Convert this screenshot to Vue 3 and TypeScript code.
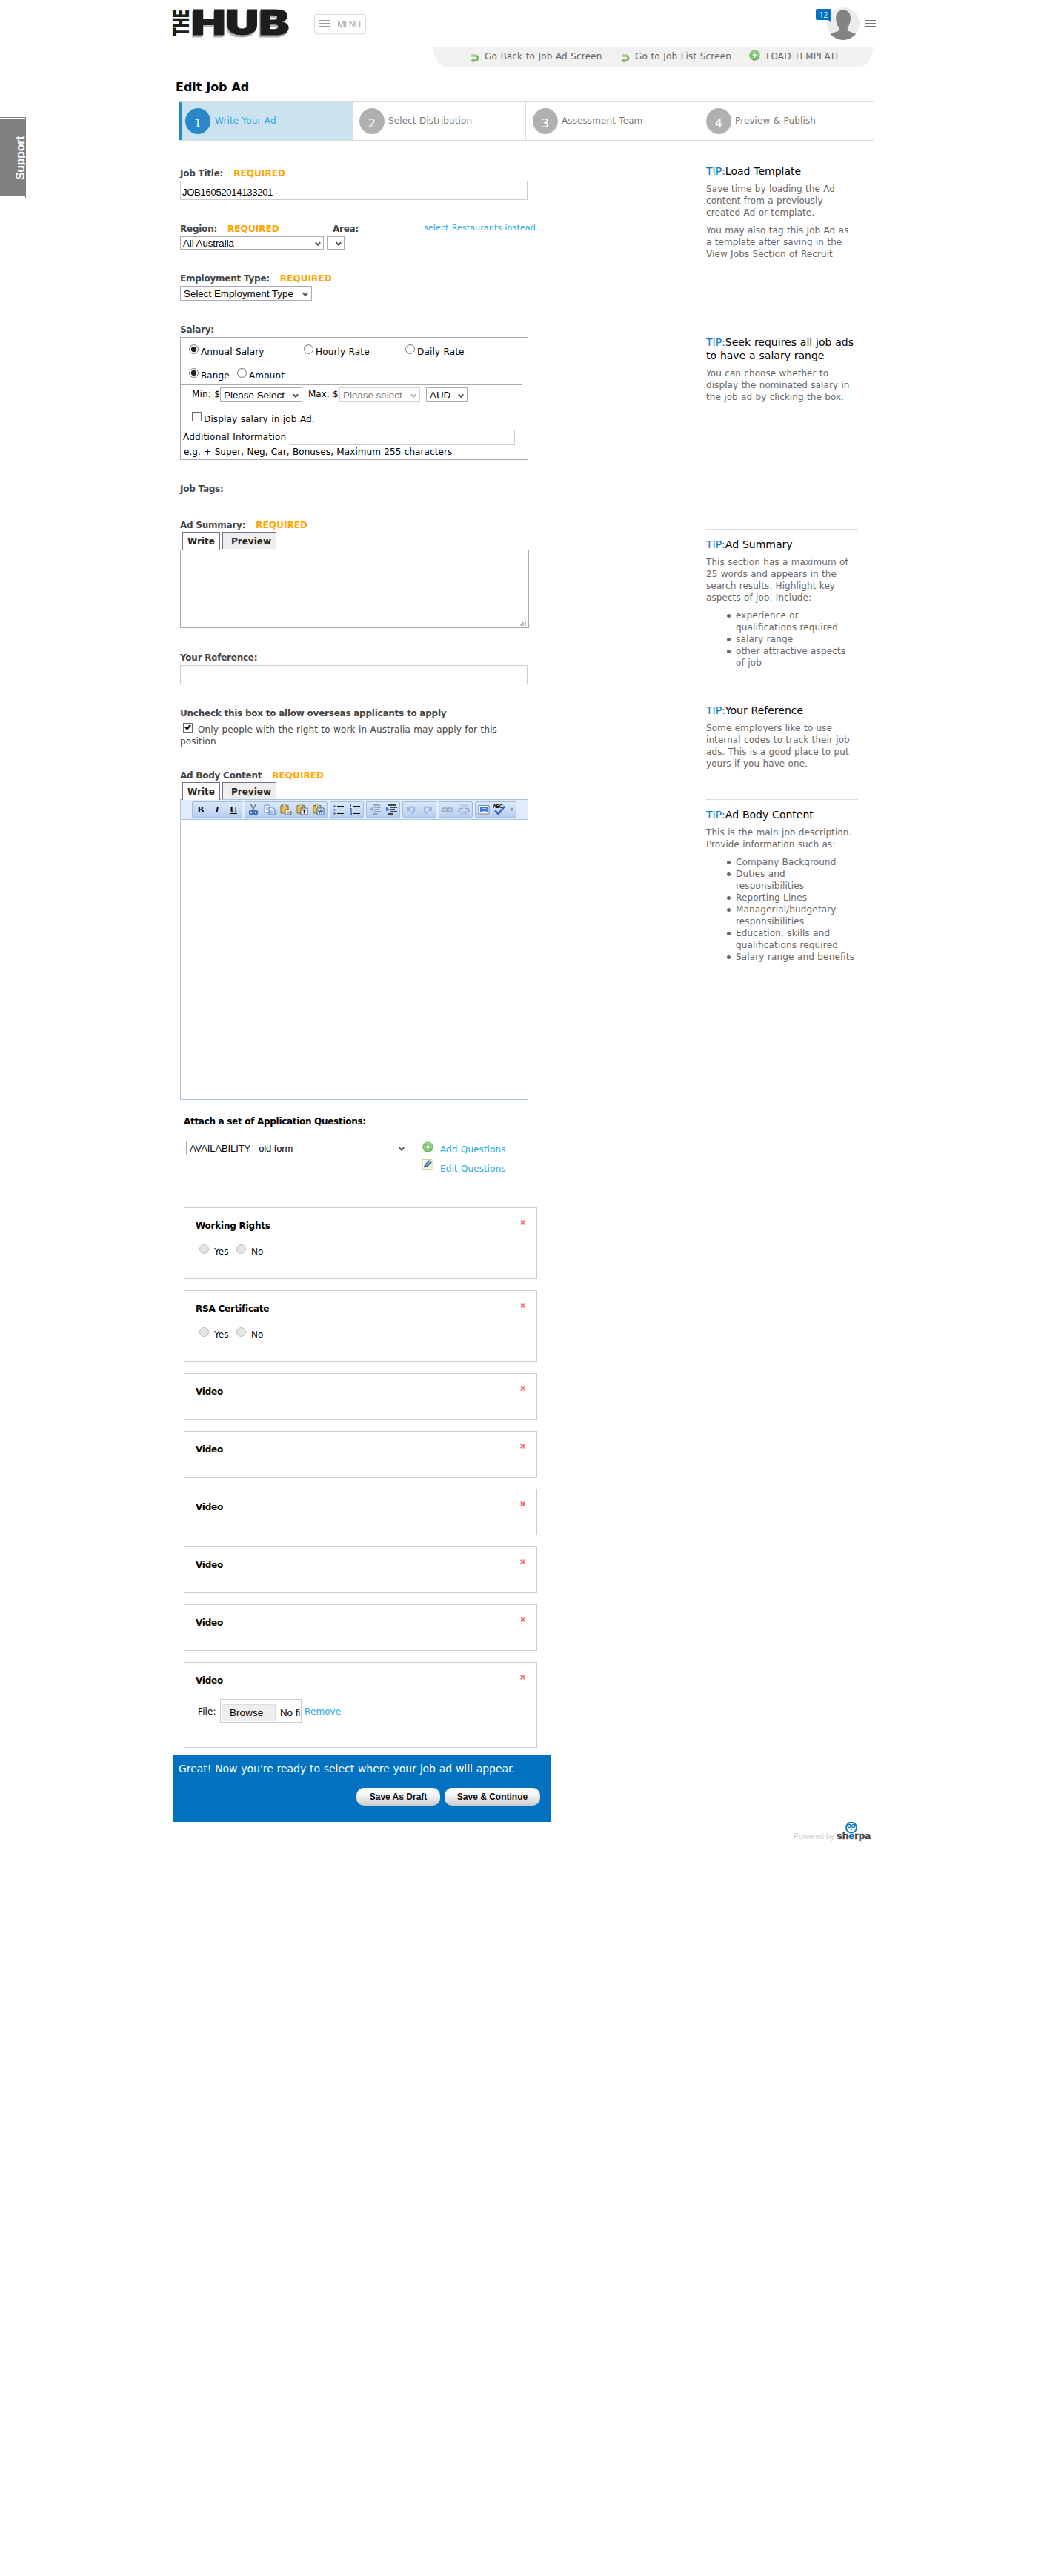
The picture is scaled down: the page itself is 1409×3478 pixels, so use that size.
<script setup lang="ts">
interface Step { n: number; label: string }
interface Tip { title: string; paras: string[]; items?: string[]; height: number }
interface Card { title: string; kind: 'yesno' | 'plain' | 'upload' }

const steps: Step[] = [
  { n: 1, label: 'Write Your Ad' },
  { n: 2, label: 'Select Distribution' },
  { n: 3, label: 'Assessment Team' },
  { n: 4, label: 'Preview & Publish' },
]

const tips: Tip[] = [
  {
    title: 'Load Template',
    paras: [
      'Save time by loading the Ad\ncontent from a previously\ncreated Ad or template.',
      'You may also tag this Job Ad as\na template after saving in the\nView Jobs Section of Recruit',
    ],
    height: 231,
  },
  {
    title: 'Seek requires all job ads\nto have a salary range',
    paras: ['You can choose whether to\ndisplay the nominated salary in\nthe job ad by clicking the box.'],
    height: 273,
  },
  {
    title: 'Ad Summary',
    paras: ['This section has a maximum of\n25 words and appears in the\nsearch results. Highlight key\naspects of job. Include:'],
    items: ['experience or\nqualifications required', 'salary range', 'other attractive aspects\nof job'],
    height: 224,
  },
  {
    title: 'Your Reference',
    paras: ['Some employers like to use\ninternal codes to track their job\nads. This is a good place to put\nyours if you have one.'],
    height: 141,
  },
  {
    title: 'Ad Body Content',
    paras: ['This is the main job description.\nProvide information such as:'],
    items: [
      'Company Background',
      'Duties and\nresponsibilities',
      'Reporting Lines',
      'Managerial/budgetary\nresponsibilities',
      'Education, skills and\nqualifications required',
      'Salary range and benefits',
    ],
    height: 240,
  },
]

const cards: Card[] = [
  { title: 'Working Rights', kind: 'yesno' },
  { title: 'RSA Certificate', kind: 'yesno' },
  { title: 'Video', kind: 'plain' },
  { title: 'Video', kind: 'plain' },
  { title: 'Video', kind: 'plain' },
  { title: 'Video', kind: 'plain' },
  { title: 'Video', kind: 'plain' },
  { title: 'Video', kind: 'upload' },
]
</script>

<template>
  <div class="page">
    <svg width="0" height="0" class="defs">
      <defs>
        <linearGradient id="greenBall" x1="0" y1="0" x2="0" y2="1">
          <stop offset="0" stop-color="#8fce7c" /><stop offset="1" stop-color="#5ba84a" />
        </linearGradient>
        <symbol id="back" viewBox="0 0 12 12">
          <path d="M1 2H6.5A3.2 3.2 0 0 1 6.5 8.8H3.5" fill="none" stroke="#80b868" stroke-width="3" />
          <path d="M4.5 5.5V12L0 8.8Z" fill="#80b868" />
          <path d="M1 1.3H6.5Q9 1.3 10 3.2" fill="none" stroke="#b4d8a4" stroke-width="1" />
        </symbol>
        <symbol id="plus" viewBox="0 0 15 15">
          <circle cx="7.5" cy="7.5" r="7.2" fill="url(#greenBall)" />
          <circle cx="7.5" cy="7.5" r="5" fill="#78bf66" stroke="#a5d999" stroke-width="1" />
          <path d="M7.5 4.6V10.4M4.6 7.5H10.4" stroke="#fff" stroke-width="2" />
        </symbol>
        <symbol id="chev" viewBox="0 0 8 7">
          <path d="M0.8 1.2L4 4.6L7.2 1.2" fill="none" stroke="currentColor" stroke-width="2.1" />
        </symbol>
        <symbol id="cross" viewBox="0 0 7 7">
          <path d="M0.8 0.8L6.2 6.2M6.2 0.8L0.8 6.2" stroke="#f56a6a" stroke-width="2" />
        </symbol>
      </defs>
    </svg>

    <div class="support"><span>Support</span></div>

    <header class="head">
      <svg class="logo" width="162" height="42" viewBox="0 0 162 42">
        <g font-family="Inter, 'Liberation Sans', sans-serif" font-weight="900">
          <g fill="#1d1d1b">
            <text transform="translate(22.5 38) rotate(-90)" font-size="30.5" textLength="36" lengthAdjust="spacingAndGlyphs">THE</text>
          </g>
          <text x="25" y="38.5" font-size="47" fill="#b3b1ae" stroke="#b3b1ae" stroke-width="1" textLength="132" lengthAdjust="spacingAndGlyphs">HUB</text>
          <text x="26.5" y="36" font-size="47" fill="#1d1d1b" stroke="#1d1d1b" stroke-width="1" textLength="132" lengthAdjust="spacingAndGlyphs">HUB</text>
        </g>
      </svg>
      <button class="menu"><i class="bars"></i>MENU</button>
      <div class="user">
        <svg width="44" height="44" viewBox="0 0 44 44">
          <clipPath id="av"><circle cx="22" cy="22" r="22" /></clipPath>
          <circle cx="22" cy="22" r="22" fill="#ececec" />
          <g clip-path="url(#av)" fill="#838383">
            <path d="M22 3.5C28.5 3.5 32 8 32 14C32 20.5 29.8 25 27.8 27.5V31C30 33 36 33.500 40 36.500V44H4V36.500C8 33.500 14 33 16.800 31V27.500C14.200 25 12.200 20.500 12.200 14C12.200 8 15.500 3.500 22 3.500Z" />
          </g>
        </svg>
        <span class="badge">12</span>
      </div>
      <i class="bars dark"></i>
    </header>

    <nav class="top-links">
      <a><svg width="12" height="12"><use href="#back" /></svg>Go Back to Job Ad Screen</a>
      <a><svg width="12" height="12"><use href="#back" /></svg>Go to Job List Screen</a>
      <a class="load"><svg width="15" height="15"><use href="#plus" /></svg>LOAD TEMPLATE</a>
    </nav>

    <h1>Edit Job Ad</h1>

    <div class="steps">
      <div v-for="s in steps" :key="s.n" class="step" :class="{ active: s.n === 1 }">
        <b>{{ s.n }}</b><span>{{ s.label }}</span>
      </div>
    </div>

    <div class="body">
      <main class="form">
        <section class="field first">
          <label>Job Title:<em>REQUIRED</em></label>
          <div class="input"><span>JOB16052014133201</span></div>
        </section>

        <section class="field region">
          <div class="line">
            <label class="reg">Region:<em>REQUIRED</em></label>
            <label class="area">Area:</label>
            <a class="small">select Restaurants instead...</a>
          </div>
          <div class="line selects">
            <div class="select low w194">All Australia<svg width="8" height="7"><use href="#chev" /></svg></div>
            <div class="select low w24"><svg width="8" height="7"><use href="#chev" /></svg></div>
          </div>
        </section>

        <section class="field employment">
          <label>Employment Type:<em>REQUIRED</em></label>
          <div class="select w178">Select Employment Type<svg width="8" height="7"><use href="#chev" /></svg></div>
        </section>

        <section class="field salary">
          <label>Salary:</label>
          <div class="salary-box">
            <div class="srow">
              <span class="opt o1"><i class="radio on"></i>Annual Salary</span>
              <span class="opt o2"><i class="radio"></i>Hourly Rate</span>
              <span class="opt"><i class="radio"></i>Daily Rate</span>
            </div>
            <div class="srow">
              <span class="opt r1"><i class="radio on"></i>Range</span>
              <span class="opt"><i class="radio"></i>Amount</span>
            </div>
            <div class="srow range">
              <div class="line minmax">
                <span class="min">Min: $</span>
                <div class="select w111">Please Select<svg width="8" height="7"><use href="#chev" /></svg></div>
                <span class="max">Max: $</span>
                <div class="select w109 off">Please select<svg width="8" height="7"><use href="#chev" /></svg></div>
                <div class="select w56">AUD<svg width="8" height="7"><use href="#chev" /></svg></div>
              </div>
              <div class="display"><i class="check"></i>Display salary in job Ad.</div>
            </div>
            <div class="add">
              <div class="line"><span class="ai">Additional Information</span><div class="input mini"></div></div>
              <p>e.g. + Super, Neg, Car, Bonuses, Maximum 255 characters</p>
            </div>
          </div>
        </section>

        <section class="field tags"><label>Job Tags:</label></section>

        <section class="field summary">
          <label>Ad Summary:<em>REQUIRED</em></label>
          <div class="tabs"><span class="tab">Write</span><span class="tab alt">Preview</span></div>
          <div class="area-box">
            <svg width="8" height="8" viewBox="0 0 8 8" fill="#bbb">
              <path d="M6 0h2v2h-2zM3 3h2v2h-2zM6 3h2v2h-2zM0 6h2v2h-2zM3 6h2v2h-2zM6 6h2v2h-2z" />
            </svg>
          </div>
        </section>

        <section class="field reference">
          <label>Your Reference:</label>
          <div class="input"></div>
        </section>

        <section class="field overseas">
          <label>Uncheck this box to allow overseas applicants to apply</label>
          <p>
            <i class="check"><svg width="11" height="11" viewBox="0 0 11 11"><path d="M2 4.5L4.600 7.300L9 1.800" fill="none" stroke="#111" stroke-width="2.300" /></svg></i><span>Only people with the right to work in Australia may apply for this<br /></span>position
          </p>
        </section>

        <section class="field content">
          <label>Ad Body Content<em>REQUIRED</em></label>
          <div class="tabs ed"><span class="tab">Write</span><span class="tab alt">Preview</span></div>
          <div class="editor">
            <div class="toolbar">
              <div class="grp g68">
                <span class="t b">B</span><span class="t i">I</span><span class="t u">U</span>
              </div>
              <div class="grp g112">
                <svg viewBox="0 0 16 16"><path d="M4.500 1L9.500 10M11 1L6.500 10" stroke="#6d7f98" stroke-width="1.600" /><circle cx="5" cy="12" r="2.300" fill="none" stroke="#2f62b5" stroke-width="1.800" /><circle cx="11" cy="12" r="2.300" fill="none" stroke="#2f62b5" stroke-width="1.800" /></svg>
                <svg viewBox="0 0 16 16"><path d="M1 2H7L9 4V12H1Z" fill="#fff" stroke="#4d7fcf" /><path d="M7 5H12L15 8V15H7Z" fill="#eaf2ff" stroke="#3a6cc4" /><path d="M3 5H6M3 7H6M9 9H13M9 11H13M9 13H13" stroke="#5f8fd8" /></svg>
                <svg viewBox="0 0 16 16"><path d="M1 2.500H11V13H1Z" fill="#eebf4d" stroke="#8a6a26" /><path d="M3.500 1H8.500V4H3.500Z" fill="#d8d8d8" stroke="#777" stroke-width=".7" /><path d="M7 8H12L15 11V15H7Z" fill="#f2f6ff" stroke="#555" /><path d="M9 11H12M9 13H13" stroke="#667" /></svg>
                <svg viewBox="0 0 16 16"><path d="M1 2.500H11V13H1Z" fill="#eebf4d" stroke="#8a6a26" /><path d="M3.500 1H8.500V4H3.500Z" fill="#d8d8d8" stroke="#777" stroke-width=".7" /><path d="M6 6H15V15H6Z" fill="#f2f6ff" stroke="#555" /><path d="M8 8.500H13M10.500 8.500V13.500" stroke="#111" stroke-width="1.500" /></svg>
                <svg viewBox="0 0 16 16"><path d="M1 2.500H11V13H1Z" fill="#eebf4d" stroke="#8a6a26" /><path d="M3.500 1H8.500V4H3.500Z" fill="#d8d8d8" stroke="#777" stroke-width=".7" /><path d="M6 6H15V15H6Z" fill="#e9f1ff" stroke="#3c66b0" /><path d="M7.500 8.500L9 13L10.500 9L12 13L13.500 8.500" fill="none" stroke="#2b57a8" stroke-width="1.400" /></svg>
              </div>
              <div class="grp g46">
                <svg viewBox="0 0 16 16"><path d="M6 3.500H15M6 8.500H15M6 13.500H15" stroke="#111" /><path d="M1.500 2.500h2v2h-2zM1.500 7.500h2v2h-2zM1.500 12.500h2v2h-2z" fill="#2e4f8f" /></svg>
                <svg viewBox="0 0 16 16"><path d="M6 3.500H15M6 8.500H15M6 13.500H15" stroke="#111" /><path d="M2.500 1v4M1 6.500h2.500L1.500 9.500H4M1 11h2.500v4H1M2 13h1.500" fill="none" stroke="#3a62b0" /></svg>
              </div>
              <div class="grp g46">
                <svg viewBox="0 0 16 16" opacity=".5"><path d="M6 2H15M7 5H16M7 8H13M7 11H16M6 14H11" stroke="#445" stroke-width="1.400" /><path d="M5 4.500V10.500L0.500 7.500Z" fill="#4a80d8" /></svg>
                <svg viewBox="0 0 16 16"><path d="M4 2H15M7 5H16M7 8H13M7 11H16M4 14H11" stroke="#111" stroke-width="1.500" /><path d="M1 4.500V10.500L5.500 7.500Z" fill="#3b70d8" /></svg>
              </div>
              <div class="grp g46">
                <svg viewBox="0 0 16 16"><path d="M3 4V9H8M3.500 8.500C6 3 12 3 12.500 7.500C12.500 10 11 12 8.500 13.500" fill="none" stroke="#8fb2e2" stroke-width="1.800" /></svg>
                <svg viewBox="0 0 16 16"><path d="M13 4V9H8M12.500 8.500C10 3 4 3 3.500 7.500C3.500 10 5 12 7.500 13.500" fill="none" stroke="#8fb2e2" stroke-width="1.800" /></svg>
              </div>
              <div class="grp g46">
                <svg viewBox="0 0 16 16" fill="none" stroke="#94a6c4" stroke-width="1.500"><rect x="1" y="6" width="7" height="4.500" rx="2.200" /><rect x="8" y="6" width="7" height="4.500" rx="2.200" /><path d="M5 8.200H11" /></svg>
                <svg viewBox="0 0 16 16" fill="none" stroke="#94a6c4" stroke-width="1.400"><path d="M7 6.500H3.200A2.200 2.200 0 0 0 3.200 11H6M9 6.500H12.800A2.200 2.200 0 0 1 12.800 11H10" /><path d="M8 0V4M3 1L6 4.500M13 1L10 4.500M8 12V16M3 15.500L6 12.500M13 15.500L10 12.500" stroke-width=".9" /></svg>
              </div>
              <div class="grp g57">
                <svg viewBox="0 0 16 16"><path d="M1 2.500H15V14H1Z" fill="#f5f9ff" stroke="#7d8798" /><path d="M3 4.500H13V12H3Z" fill="#3d79dd" /><path d="M5 6.500H11.500M5 8.500H11.500M5 10.500H11.500" stroke="#c5dbff" stroke-width=".8" /></svg>
                <svg viewBox="0 0 16 16" overflow="visible"><text x="-1" y="5.500" font-family="Liberation Sans, sans-serif" font-weight="700" font-size="7" textLength="14">ABC</text><path d="M2 9.500L6.500 14L15 3.500" fill="none" stroke="#3b67c4" stroke-width="2.600" /></svg>
                <svg class="dd" viewBox="0 0 5 16"><path d="M0 6.500H5L2.500 9.500Z" fill="#5b7fb5" /></svg>
              </div>
            </div>
          </div>
        </section>

        <section class="attach">
          <h2>Attach a set of Application Questions:</h2>
          <div class="line att">
            <div class="select w300">AVAILABILITY - old form<svg width="8" height="7"><use href="#chev" /></svg></div>
            <div class="links">
              <a><svg width="15" height="15"><use href="#plus" /></svg>Add Questions</a>
              <a>
                <svg width="15" height="17" viewBox="0 0 15 17">
                  <path d="M.5 1.500H13.500V15.500H.5Z" fill="#fdfdf4" stroke="#cbcf9c" />
                  <path d="M5 10L11.500 4" stroke="#2f5878" stroke-width="5" />
                  <path d="M5.500 9.200L12.500 3" stroke="#8fb9d8" stroke-width="2" />
                  <path d="M2.500 12.500L3.500 8.500L6.500 11.500Z" fill="#2a3440" />
                </svg>Edit Questions</a>
            </div>
          </div>
        </section>

        <div class="cards">
          <article v-for="(c, k) in cards" :key="k" class="card" :class="c.kind">
            <svg class="x" width="7" height="7"><use href="#cross" /></svg>
            <h3>{{ c.title }}</h3>
            <div v-if="c.kind === 'yesno'" class="yn">
              <i class="radio dis"></i><span class="yes">Yes</span><i class="radio dis"></i><span>No</span>
            </div>
            <div v-if="c.kind === 'upload'" class="file-row">
              <span>File:</span>
              <div class="file-box"><b>Browse_</b><u>No fi</u></div>
              <a>Remove</a>
            </div>
          </article>
        </div>

        <div class="finish">
          <p>Great! Now you're ready to select where your job ad will appear.</p>
          <div class="btns"><button>Save As Draft</button><button class="wide">Save &amp; Continue</button></div>
        </div>
      </main>

      <aside class="tips">
        <section v-for="t in tips" :key="t.title" class="tip" :style="{ height: t.height + 'px' }">
          <h4><span>TIP:</span>{{ t.title }}</h4>
          <p v-for="p in t.paras" :key="p">{{ p }}</p>
          <ul v-if="t.items"><li v-for="i in t.items" :key="i">{{ i }}</li></ul>
        </section>
      </aside>
    </div>

    <footer>
      <span>Powered by</span>
      <svg width="50" height="28" viewBox="0 0 50 28">
        <text x="1" y="23" font-family="Liberation Sans, sans-serif" font-weight="700" font-size="13.500" fill="#444" stroke="#444" stroke-width=".4" textLength="46" lengthAdjust="spacingAndGlyphs">sh<tspan fill="#0a78c2" stroke="#0a78c2">e</tspan>rpa</text>
        <circle cx="21" cy="7.500" r="7" fill="#fff" stroke="#0a78c2" stroke-width="1.800" />
        <g fill="none" stroke="#0a78c2" stroke-width="1.300"><circle cx="18.300" cy="5.500" r="2.100" /><circle cx="23.700" cy="5.500" r="2.100" /><circle cx="21" cy="10" r=".7" /></g>
      </svg>
    </footer>
  </div>
</template>

<style>
body { margin: 0; background: #fff; }
</style>

<style scoped>
* { box-sizing: border-box; }
.page {
  position: relative; width: 1409px; height: 3478px; overflow: hidden; background: #fff;
  font: 12px/16px 'DejaVu Sans', Verdana, sans-serif; color: #000; word-spacing: .4px; letter-spacing: .1px;
}
h1, h2, h3, h4, p, ul { margin: 0; padding: 0; font-weight: 400; }
svg { flex: none; display: block; }
.defs { position: absolute; }
a { color: #29a9dc; }
.line { display: flex; align-items: flex-start; }

.support {
  position: absolute; left: 0; top: 158px; width: 35px; height: 110px; background: #808080;
  border: 1px solid #808080; border-width: 1px 1px 1px 0; box-shadow: inset 0 2px #fff, inset 0 -2px #fff; overflow: hidden;
}
.support span {
  position: absolute; left: 19px; top: 84px; transform: rotate(-90deg); transform-origin: 0 0;
  font: bold 16px/18px 'Liberation Sans', Arial, sans-serif; color: #fff; letter-spacing: -.3px;
}

.head { height: 64px; border-bottom: 1px solid #eee; display: flex; padding-left: 232px; }
.logo { margin-top: 11px; overflow: visible; letter-spacing: 0; word-spacing: 0; }
.menu {
  margin: 19px 0 0 30px; width: 70px; height: 26px; padding: 0 0 0 5px; border: 1px solid #ddd; border-radius: 3px;
  background: #fff; box-shadow: 0 1px 2px #ddd; display: flex; align-items: center; gap: 10px;
  font: 12px 'Open Sans', sans-serif; letter-spacing: -1px; color: #999;
}
.bars { width: 15px; height: 10px; background: linear-gradient(#999 2px, transparent 2px 4px, #999 4px 6px, transparent 6px 8px, #999 8px); }
.bars.dark { width: 15px; margin: 27px 0 0 7px; background: linear-gradient(#777 2px, transparent 2px 4px, #777 4px 6px, transparent 6px 8px, #777 8px); }
.user { position: relative; margin: 10px 0 0 622px; width: 44px; height: 44px; }
.badge {
  position: absolute; left: -15px; top: 2px; width: 21px; height: 15px; background: #0072c0; border-radius: 2px 2px 0 2px;
  color: #fff; font: 10px/16px 'Open Sans', sans-serif; text-align: center;
}
.badge::after { content: ''; position: absolute; right: 0; top: 15px; border: 2px solid; border-color: #0072c0 #0072c0 transparent transparent; }

.top-links {
  margin: -1px 0 0 585px; width: 593px; height: 28px; background: #f1f1f1; border-radius: 0 0 20px 20px / 0 0 26px 26px;
  display: flex; padding: 5px 0 0 50px; letter-spacing: .18px;
}
.top-links a { display: flex; color: #666; line-height: 16px; height: 16px; white-space: nowrap; }
.top-links a svg { margin: 5px 7px 0 0; }
.top-links a:nth-child(1) { width: 203px; }
.top-links a:nth-child(2) { width: 173px; }
.top-links .load svg { margin: -1px 8px 0 0; }

h1 { margin: 15px 0 0 237px; height: 22px; font-size: 16px; line-height: 22px; font-weight: 700; letter-spacing: -.05px; padding-top: 1px; }

.steps { margin: 9px 0 0 241px; width: 939px; height: 53px; display: flex; border: solid #ddd; border-width: 1px 0; }
.step { width: 234px; display: flex; padding: 8px 0 0 9px; border-left: 1px solid #ddd; color: #777; }
.step b {
  width: 34px; height: 35px; border-radius: 50%; background: #b0b0b0; color: #fff; font-weight: 400; font-size: 16px;
  line-height: 42px; text-align: center; margin-right: 5px; overflow: hidden;
}
.step span { line-height: 16px; margin-top: 9px; }
.step.active { background: #cbe3f1; border-left: 4px solid #2a88c8; padding-left: 5px; color: #29a9dc; }
.step.active b { background: #2a88c8; margin-right: 6px; }

.body { display: flex; padding-left: 233px; height: 2270px; }
.form { width: 714px; padding-left: 10px; display: flex; flex-direction: column; }
.form > * { flex-shrink: 0; }
label { display: block; height: 16px; font-weight: 700; color: #444; letter-spacing: -.24px; word-spacing: 0; white-space: nowrap; }
em { font-style: normal; color: #ffa500; margin-left: 14px; letter-spacing: .08px; }
.input { width: 469px; height: 26px; margin-top: 2px; border: 1px solid #ccc; padding: 0 2px; font: 13px/32px 'Liberation Sans', Arial, sans-serif; }
.input span { position: relative; top: -1px; letter-spacing: -.26px; }
.select {
  height: 20px; border: 1px solid #ababb3; padding-left: 4px; font: 13.4px/19px 'Liberation Sans', Arial, sans-serif; word-spacing: 0; letter-spacing: 0;
  display: flex; align-items: center; justify-content: space-between; padding-right: 4px; color: #000; background: #fff; white-space: nowrap;
}
.select svg { color: #555; margin-top: 2px; }
.select.low { height: 18px; padding-left: 3px; font-size: 13.2px; line-height: 17px; padding-right: 3px; }
.select.off { color: #777; border-color: #d5d5d9; }
.select.off svg { color: #bbb; }
.w194 { width: 194px; } .w24 { width: 24px; justify-content: flex-end; } .w178 { width: 178px; } .w111 { width: 111px; }
.w109 { width: 109px; } .w56 { width: 56px; } .w300 { width: 300px; font-size: 13px; letter-spacing: -.1px; }

.first { margin-top: 36px; }
.region { margin-top: 31px; }
.region .reg { width: 206px; } .region .area { width: 123px; }
.small { font-size: 11px; line-height: 14px; white-space: nowrap; letter-spacing: .15px; }
.region .selects { gap: 4px; margin-top: 2px; }
.employment { margin-top: 31px; }
.employment .select { margin-top: 2px; }
.salary { margin-top: 31px; }
.salary-box { margin-top: 2px; width: 470px; height: 166px; border: 1px solid #aaa; }
.srow { width: 461px; height: 32px; border-bottom: 1px solid #aaa; display: flex; padding: 9px 0 0 11px; letter-spacing: .15px; }
.opt { display: flex; height: 18px; line-height: 20px; white-space: nowrap; }
.o1 { width: 155px; } .o2 { width: 137px; } .r1 { width: 65px; }
.radio { flex: none; width: 13px; height: 13px; border: 1px solid #777; border-radius: 50%; margin-right: 3px; background: #fff; }
.radio.on { background: radial-gradient(circle, #222 0 3.3px, #fff 4.200px); }
.radio.dis { background: #e5e5e5; border-color: #bbb; }
.range { height: 57px; display: block; padding: 3px 0 0 15px; }
.minmax { line-height: 18px; }
.min { width: 38px; white-space: nowrap; } .max { width: 42px; margin-left: 8px; white-space: nowrap; letter-spacing: 0; }
.minmax .w56 { margin-left: 8px; }
.display { display: flex; margin-top: 13px; line-height: 20px; height: 16px; }
.check { flex: none; width: 13px; height: 13px; border: 1px solid #666; margin-right: 3px; background: #fff; display: inline-block; }
.add { padding: 3px 0 0 3px; }
.add .ai { width: 144px; line-height: 20px; padding-top: 0; white-space: nowrap; letter-spacing: .25px; }
.input.mini { width: 304px; height: 21px; margin-top: 0; }
.add p { line-height: 16px; padding-left: 1px; margin-top: 1px; white-space: nowrap; letter-spacing: .08px; }
.tags { margin-top: 31px; }
.summary { margin-top: 33px; }
.tabs { display: flex; margin: 1px 0 0 3px; gap: 3px; height: 24px; position: relative; color: #222; letter-spacing: 0; }
.tab { width: 51px; height: 25px; border: 1px solid #77728a; border-bottom: 0; background: #fff; font-weight: 700; line-height: 24px; padding-left: 6px; }
.tab.alt { width: 73px; height: 23px; background: #eee; padding-left: 11px; }
.tabs.ed { height: 23px; }
.tabs.ed .tab { height: 24px; } .tabs.ed .tab.alt { height: 23px; }
.area-box { width: 471px; height: 106px; border: 1px solid #aaa; display: flex; align-items: flex-end; justify-content: flex-end; padding: 0 3px 2px 0; }
.reference { margin-top: 32px; }
.overseas { margin-top: 31px; }
.overseas p { margin-top: 5px; padding-top: 1px; height: 33px; color: #444; white-space: nowrap; letter-spacing: .14px; }
.overseas .check { margin: -1px 7px 0 4px; vertical-align: top; height: 13px; }
.content { margin-top: 30px; }
.editor { width: 470px; height: 406px; border: 1px solid #a9c2de; }
.toolbar { height: 27px; background: #e1ecfd; border-bottom: 1px solid #a9c2de; display: flex; gap: 3px; padding: 2px 0 0 15px; }
.grp { height: 22px; border: 1px solid #9fbce4; border-radius: 2px; background: linear-gradient(#dbe7f8, #b9cfee); display: flex; align-items: center; justify-content: space-around; }
.grp svg { width: 16px; height: 16px; }
.grp .dd { width: 5px; }
.g68 { width: 68px; } .g112 { width: 112px; } .g46 { width: 46px; } .g57 { width: 56px; }
.t { font: bold 13px/18px 'Liberation Serif', serif; width: 20px; text-align: center; }
.t.i { font-style: italic; } .t.u { text-decoration: underline; }

.attach { margin-top: 21px; padding-left: 5px; height: 124px; }
h2 { height: 16px; font-size: 12px; line-height: 16px; font-weight: 700; white-space: nowrap; letter-spacing: -.3px; word-spacing: 0; }
.att { margin: 18px 0 0 3px; }
.links { margin-left: 18px; }
.links a { display: flex; height: 26px; line-height: 16px; padding-top: 4px; white-space: nowrap; }
.links a svg { margin: -3px 9px 0 1px; }
.links a:nth-child(2) svg { margin: -6px 9px 0 0; padding-right: 0; width: 16px; }

.cards { margin-left: 5px; width: 477px; display: flex; flex-direction: column; gap: 15px; }
.card { position: relative; height: 63px; border: 1px solid #ccc; padding: 16px 0 0 15px; }
.card.yesno { height: 97px; } .card.upload { height: 116px; }
.card .x { position: absolute; right: 15px; top: 16px; }
h3 { font-size: 12px; line-height: 16px; height: 16px; font-weight: 700; letter-spacing: -.22px; word-spacing: 0; }
.yn { display: flex; margin: 17px 0 0 5px; line-height: 20px; }
.yn .radio { margin-right: 7px; }
.yes { width: 30px; }
.file-row { display: flex; margin: 17px 0 0 3px; line-height: 17px; }
.file-row > span, .file-row > a { margin-top: 9px; }
.file-row > span { width: 30px; white-space: nowrap; }
.file-box { width: 110px; height: 32px; border: 1px solid #ccc; display: flex; padding: 6px 0 0 1px; margin-right: 4px; overflow: hidden; font: 13.400px/22px 'Liberation Sans', Arial, sans-serif; }
.file-box b { font-weight: 400; width: 73px; height: 23px; border: 1px solid #ddd; background: #eee; padding-left: 10px; }
.file-box u { text-decoration: none; margin: 1px 0 0 6px; white-space: nowrap; letter-spacing: -.2px; }

.finish { margin: 10px 0 0 -10px; width: 510px; height: 90px; background: #0072c0; color: #fff; padding: 13px 0 0 8px; }
.finish p { font-size: 14px; line-height: 18px; height: 18px; margin-top: -4px; white-space: nowrap; letter-spacing: -.04px; }
.btns { display: flex; gap: 6px; margin: 17px 0 0 240px; }
.finish button {
  width: 113px; height: 24px; border: 0; border-radius: 10px; background: linear-gradient(#fff, #f2f2f2 45%, #ccc); padding: 0;
  font: bold 12px 'Liberation Sans', Arial, sans-serif; color: #111; word-spacing: 0;
}
.finish .wide { width: 129px; }

.tips { border-left: 1px solid #ccc; padding: 20px 0 0 5px; width: 216px; }
.tip { width: 205px; border-top: 1px solid #ddd; padding-top: 11px; color: #666; white-space: pre; }
h4 { font-size: 14px; line-height: 18px; color: #000; letter-spacing: 0; }
h4 span { color: #0a78c2; }
.tip p { margin-top: 8px; line-height: 16px; letter-spacing: .08px; }
.tip h4 + p { margin-top: 7px; }
.tip ul { list-style: none; margin: 8px 0 0 40px; letter-spacing: .15px; }
.tip li { position: relative; }
.tip li::before { content: ''; position: absolute; left: -12px; top: 6px; width: 5px; height: 5px; border-radius: 50%; background: #666; }

footer { display: flex; margin: 0 0 0 1071px; }
footer span { width: 57px; margin-top: 11px; font: 10.5px/16px 'Liberation Sans', Arial, sans-serif; color: #ccc; white-space: nowrap; letter-spacing: -.1px; }
footer svg { letter-spacing: 0; }
</style>
